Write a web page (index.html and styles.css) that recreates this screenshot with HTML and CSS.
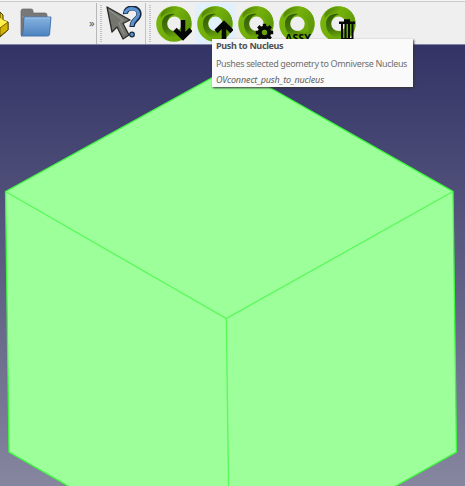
FILE: index.html
```
<!DOCTYPE html>
<html lang="en">
<head>
<meta charset="utf-8">
<title>Omniverse Connector</title>
<link rel="stylesheet" href="styles.css">
</head>
<body>
<svg class="defs" width="0" height="0" aria-hidden="true">
  <defs>
    <linearGradient id="ringBase" x1="0" y1="0" x2="1" y2="1">
      <stop offset="0" stop-color="#79b90b"/><stop offset=".55" stop-color="#72ae09"/><stop offset="1" stop-color="#65a006"/>
    </linearGradient>
    <linearGradient id="ringTop" x1="0" y1="0" x2="1" y2=".7">
      <stop offset="0" stop-color="#427408"/><stop offset=".4" stop-color="#76b20a"/><stop offset="1" stop-color="#5a950a"/>
    </linearGradient>
    <linearGradient id="ringInner" x1=".3" y1="0" x2=".5" y2="1">
      <stop offset="0" stop-color="#345d08"/><stop offset=".6" stop-color="#467809"/><stop offset="1" stop-color="#70ac09"/>
    </linearGradient>
    <linearGradient id="folderFront" x1="0" y1="0" x2="0" y2="1">
      <stop offset="0" stop-color="#86b2df"/><stop offset="1" stop-color="#4d83c1"/>
    </linearGradient>
    <mask id="hole"><rect width="36" height="36" fill="#fff"/><circle cx="18.500" cy="17.800" r="7.200" fill="#000"/></mask>
    <g id="ring" mask="url(#hole)">
      <circle cx="18" cy="18" r="17.800" fill="url(#ringBase)"/>
      <path d="M7 5C15-2 29-1 34 10C37 18 34 26 28 32C32 22 29 12 20 9C14 6 9 7 5 12C4 9 5 7 7 5Z" fill="url(#ringTop)"/>
      <path d="M19 8C11 7 6 11 6 18C6 26 12 32 20 32C25 32 28 29 30 26C23 28 15 25 12 20C10 15 13 10 19 8Z" fill="url(#ringInner)"/>
    </g>
  </defs>
</svg>
<main class="window">
  <header class="toolbar">
    <div class="file-tools">
      <svg class="box-icon" viewBox="0 0 10 40"><path d="M0 12L3 15V20L8 22V30L0 37Z" fill="#eac900" stroke="#423900"/><path d="M0 18L3 20L8 22L0 28Z" fill="#fff04b"/><path d="M0 28L8 22V30L0 36Z" fill="#d7b400" stroke="#554900" stroke-width=".8"/></svg>
      <svg class="folder-icon" viewBox="0 0 33 30"><path d="M2 3Q2 1 4 1H12Q14 1 14 3V5H26Q28 5 28 7V27H2Z" fill="#787878" stroke="#666" stroke-width=".7"/><path d="M3 9H27" stroke="#969696"/><path d="M5 9H32L30.500 27Q30 28 28 28H2Q4 27 4 24Z" fill="url(#folderFront)" stroke="#3e6ea8" stroke-width=".9"/><path d="M6 10H31" stroke="#a8caec" stroke-width=".8"/></svg>
      <span class="more">»</span>
    </div>
    <div class="help-tools">
      <i class="grip"></i>
      <svg class="help-icon" viewBox="0 0 36 36"><path d="M1 1L24 14L17 17.500L23 29L17 33L11 21L6 26Z" fill="#74766f" stroke="#292c29" stroke-width="1.300" stroke-linejoin="round"/><path d="M3 4L17 14L13 17L18 28" fill="none" stroke="#969891" stroke-width="1"/><path d="M19.500 8C19 0 33 0 33 8C33 14 26 13 26 21" fill="none" stroke="#182838" stroke-width="5.200"/><path d="M19.500 7.300C19.500 1 32.500 1 32.500 8C32.500 13 26 13 26 20" fill="none" stroke="#5b93d5" stroke-width="3.200"/><circle cx="26" cy="28.500" r="2.300" fill="#5b93d5" stroke="#182838" stroke-width="1.200"/></svg>
    </div>
    <div class="omni-tools">
      <i class="grip"></i>
      <button class="tool" aria-label="Pull"><svg viewBox="0 0 36 36"><use href="#ring"/><path d="M27 14V31M19 23.500L27 31.500L35 23.500" fill="none" stroke="#050805" stroke-width="4.600"/></svg></button>
      <button class="tool active" aria-label="Push"><svg viewBox="0 0 36 36"><use href="#ring"/><path d="M27 36V18M19 25.500L27 17.500L35 25.500" fill="none" stroke="#050805" stroke-width="4.600"/></svg></button>
      <button class="tool" aria-label="Settings"><svg viewBox="0 0 36 36"><use href="#ring"/><g transform="translate(26.500 26.500)"><circle r="4.700" fill="none" stroke="#050805" stroke-width="4"/><path d="M0-5.500V-8.700M0 5.500V8.700M-5.500 0H-8.700M5.500 0H8.700M-4-4L-6.200-6.200M4-4L6.200-6.200M-4 4L-6.200 6.200M4 4L6.200 6.200" stroke="#050805" stroke-width="3.400"/></g></svg></button>
      <button class="tool" aria-label="Assembly"><svg viewBox="0 0 36 36"><use href="#ring"/><text class="assy" x="6" y="35.500" textLength="26" lengthAdjust="spacingAndGlyphs">ASSY</text></svg></button>
      <button class="tool" aria-label="Delete"><svg viewBox="0 0 36 36"><use href="#ring"/><path d="M19 16.700H35M24 14.500H30" stroke="#050805" stroke-width="2.600"/><path d="M22 18V36M25.500 18V36M29 18V36M32.500 18V36" stroke="#050805" stroke-width="2"/><path d="M21 33H33" stroke="#050805" stroke-width="2"/></svg></button>
    </div>
  </header>
  <section class="viewport">
    <svg class="model" viewBox="0 45 465 441">
      <path d="M5.500 191.500L232.500 66.500L453 191.500L456.500 452L229.800 579L9 452Z" fill="#9cff9a"/>
      <path class="edges" d="M5.500 191.500L226.300 318.500L453 191.500M226.300 318.500L229.800 579"/>
      <path class="edges outline" d="M5.500 191.500L232.500 66.500L453 191.500L456.500 452L229.800 579L9 452Z"/>
    </svg>
  </section>
  <aside class="tooltip" role="tooltip">
    <strong>Push to Nucleus</strong>
    <span>Pushes selected geometry to Omniverse Nucleus</span>
    <em>OVconnect_push_to_nucleus</em>
  </aside>
</main>
</body>
</html>
```

FILE: styles.css
```
* { box-sizing: border-box; }
body { margin: 0; overflow: hidden; }
.defs { position: absolute; }
.window { position: relative; display: flex; flex-direction: column; width: 465px; height: 486px; font-family: "Noto Sans", "Open Sans", sans-serif; }
.toolbar { display: flex; flex: 0 0 45px; height: 45px; padding-top: 2px; background: #efefef; border-top: 1px solid #f5f5f5; border-bottom: 1px solid #8181a0; box-shadow: inset 0 1px #c9c9c9; }
.file-tools { display: flex; width: 97px; border-right: 1px solid #b8b8b8; }
.box-icon { width: 10px; height: 40px; margin-top: -3px; }
.folder-icon { width: 33px; height: 30px; margin: 5px 0 0 9px; }
.more { margin: 12px 0 0 37px; color: #555; font-size: 11px; line-height: 15px; }
.help-tools { display: flex; width: 49px; border-right: 1px solid #c3c3c3; }
.grip { width: 2px; height: 37px; margin: 2px 0 0 3px; background: repeating-linear-gradient(#c2c2c2 0 1px, #efefef 1px 2px); }
.help-icon { width: 36px; height: 36px; margin: 3px 0 0 4px; }
.omni-tools { display: flex; }
.omni-tools .grip { margin-right: 3px; }
.tool { display: flex; width: 41px; height: 41px; padding: 3px 3px 0 2px; border: 0; background: transparent; }
.tool.active { background: #e1f0fa; }
.tool svg { width: 36px; height: 36px; }
.assy { font: bold 11px "Open Sans", sans-serif; fill: #050805; }
.viewport { flex: 1; background: linear-gradient(#333366, #86869f); }
.model { display: block; width: 465px; height: 441px; }
.edges { fill: none; stroke: #58f958; stroke-width: 1.300; }
.outline { stroke: #3df83d; }
.tooltip { position: absolute; left: 212px; top: 39px; display: flex; flex-direction: column; width: 201px; height: 48px; padding: 0 4px; background: #fafafa; box-shadow: 1px 1px 2px #333; color: #707070; font-size: 9px; line-height: 17px; white-space: nowrap; }
.tooltip strong { flex: none; height: 16px; line-height: 14px; letter-spacing: -.33px; color: #505050; }
.tooltip span { letter-spacing: -.35px; }
.tooltip em { line-height: 15px; letter-spacing: -.12px; color: #606060; }
```
